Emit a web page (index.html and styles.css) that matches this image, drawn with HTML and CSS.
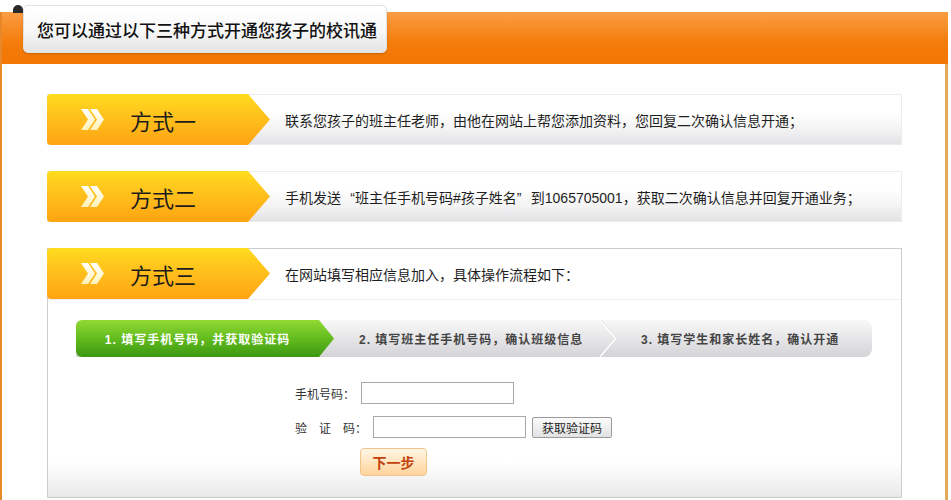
FILE: index.html
```html
<!DOCTYPE html>
<html lang="zh">
<head>
<meta charset="utf-8">
<title>开通校讯通</title>
<link rel="stylesheet" href="styles.css">
</head>
<body>
<div class="page">
  <div class="head">
    <div class="tab">您可以通过以下三种方式开通您孩子的校讯通</div>
  </div>
  <div class="main">
    <div class="way">
      <div class="label">
        <svg class="chev" viewBox="0 0 24 21" width="24" height="21"><defs><linearGradient id="cg1" x1="0" y1="0" x2="0" y2="1"><stop offset="0" stop-color="#ffffff"/><stop offset="1" stop-color="#fff2b8"/></linearGradient></defs><path d="M0 0H7L14 10.5L7 21H0L7 10.5Z" fill="url(#cg1)"/><path d="M9 0H16L23 10.5L16 21H9L16 10.5Z" fill="url(#cg1)"/></svg>
        <span class="lbl-text">方式一</span>
      </div>
      <div class="desc">联系您孩子的班主任老师，由他在网站上帮您添加资料，您回复二次确认信息开通；</div>
    </div>
    <div class="way">
      <div class="label">
        <svg class="chev" viewBox="0 0 24 21" width="24" height="21"><path d="M0 0H7L14 10.5L7 21H0L7 10.5Z" fill="url(#cg1)"/><path d="M9 0H16L23 10.5L16 21H9L16 10.5Z" fill="url(#cg1)"/></svg>
        <span class="lbl-text">方式二</span>
      </div>
      <div class="desc">手机发送<span class="q ql">“</span>班主任手机号码#孩子姓名<span class="q">”</span>到1065705001，获取二次确认信息并回复开通业务；</div>
    </div>
    <div class="box">
      <div class="way way-head">
        <div class="label">
          <svg class="chev" viewBox="0 0 24 21" width="24" height="21"><path d="M0 0H7L14 10.5L7 21H0L7 10.5Z" fill="url(#cg1)"/><path d="M9 0H16L23 10.5L16 21H9L16 10.5Z" fill="url(#cg1)"/></svg>
          <span class="lbl-text">方式三</span>
        </div>
        <div class="desc">在网站填写相应信息加入，具体操作流程如下：</div>
      </div>
      <div class="steps">
        <div class="step step1">1. 填写手机号码，并获取验证码</div>
        <div class="step step2">2. 填写班主任手机号码，确认班级信息</div>
        <svg class="sep" viewBox="0 0 20 37" width="20" height="37"><polyline points="2,0 18,18.5 2,37" fill="none" stroke="#c9c9cc" stroke-width="1"/><polyline points="1,0 17,18.5 1,37" fill="none" stroke="#ffffff" stroke-width="1.6"/></svg>
        <div class="step step3">3. 填写学生和家长姓名，确认开通</div>
      </div>
      <div class="form">
        <div class="frow">
          <label class="flabel">手机号码：</label>
          <input class="ipt" type="text">
        </div>
        <div class="frow">
          <label class="flabel"><span class="sp">验</span><span class="sp">证</span>码：</label>
          <input class="ipt" type="text">
          <button class="getcode" type="button">获取验证码</button>
        </div>
        <button class="next" type="button">下一步</button>
      </div>
    </div>
  </div>
</div>
</body>
</html>
```

FILE: styles.css
```css
* { box-sizing: border-box; }
body {
  margin: 0;
  padding-top: 12px;
  background: #fff;
  font-family: "Liberation Sans", "Noto Sans CJK SC", sans-serif;
  color: #222;
}
.page {
  width: 948px;
}
.head {
  position: relative;
  display: flex;
  align-items: flex-start;
  height: 52px;
  padding-left: 21px;
  border-left: 2px solid #e8862a;
  background: linear-gradient(#fb9d44, #f47c0a 60%, #f27604);
}
.head::before {
  content: "";
  position: absolute;
  left: 11px;
  top: -7px;
  width: 10px;
  height: 8px;
  border-radius: 5px 5px 0 0;
  background: #2a2a2a;
}
.tab {
  position: relative;
  margin-top: -7px;
  width: 364px;
  height: 48px;
  padding-left: 13px;
  display: flex;
  align-items: center;
  font-size: 17px;
  font-weight: 500;
  color: #111;
  border: 1px solid #e2e2e2;
  border-radius: 5px;
  background: linear-gradient(#ffffff, #f9f9f9 50%, #e4e4e4);
  box-shadow: 0 1px 2px rgba(0, 0, 0, 0.18);
}
.main {
  height: 436px;
  padding: 30px 0 0 45px;
  border-left: 2px solid #e8892a;
  border-right: 3px solid #e2a85c;
}
.way {
  display: flex;
  align-items: center;
  width: 855px;
  height: 51px;
  margin-bottom: 26px;
  border: 1px solid #ececec;
  background: linear-gradient(#ffffff 35%, #f3f3f4 70%, #e3e3e6);
}
.label {
  position: relative;
  align-self: stretch;
  width: 201px;
  margin: -1px 0 -1px -1px;
  padding-left: 34px;
  display: flex;
  align-items: center;
  border-radius: 4px 0 0 4px;
  background: linear-gradient(#ffdc1e, #ffc01c 45%, #ffa412);
}
.label::after {
  content: "";
  position: absolute;
  left: 100%;
  top: 0;
  bottom: 0;
  width: 22px;
  background: linear-gradient(#ffdc1e, #ffc01c 45%, #ffa412);
  clip-path: polygon(0 0, 100% 50%, 0 100%);
}
.chev { display: block; flex: none; }
.lbl-text {
  margin-left: 25px;
  font-family: "Noto Sans CJK SC", sans-serif;
  font-size: 22px;
  color: #1c1c1c;
  line-height: 1;
}
.desc {
  margin-left: 37px;
  font-size: 14px;
  color: #1e1e1e;
}
.q {
  display: inline-block;
  width: 14px;
}
.ql { text-align: right; }
.box {
  width: 855px;
  height: 250px;
  border: 1px solid #cdcdcd;
  background: linear-gradient(#ffffff 86%, #e9e9e9);
}
.way-head {
  width: auto;
  height: 51px;
  margin: 0;
  border: none;
  border-bottom: 1px solid #eeeeee;
  background: transparent;
}
.way-head .label {
  margin: -1px 0 0 -1px;
}
.steps {
  display: flex;
  align-items: center;
  width: 796px;
  height: 37px;
  margin: 20px 0 0 28px;
  border-radius: 0 8px 8px 0;
  background: linear-gradient(#f8f8f8, #e6e6e8 50%, #d4d4d8);
  font-size: 12px;
  font-weight: bold;
  letter-spacing: 1px;
  color: #444;
}
.step { white-space: nowrap; }
.step1 {
  position: relative;
  align-self: stretch;
  width: 243px;
  display: flex;
  align-items: center;
  justify-content: center;
  color: #fff;
  border-radius: 6px 0 0 6px;
  background: linear-gradient(#92da34, #62bc1e 50%, #3c9811);
}
.step1::after {
  content: "";
  position: absolute;
  left: 100%;
  top: 0;
  bottom: 0;
  width: 15px;
  background: linear-gradient(#92da34, #62bc1e 50%, #3c9811);
  clip-path: polygon(0 0, 100% 50%, 0 100%);
}
.step2 {
  width: 280px;
  padding-left: 40px;
}
.sep { display: block; flex: none; }
.step3 { padding-left: 22px; }
.form {
  margin-top: 25px;
  padding-left: 247px;
  font-size: 12px;
  color: #333;
}
.frow {
  display: flex;
  align-items: center;
  height: 22px;
  margin-bottom: 12px;
}
.frow + .frow { margin-bottom: 10px; }
.flabel {
  margin-right: 6px;
  white-space: nowrap;
}
.sp { margin-right: 12px; }
.ipt {
  width: 153px;
  height: 22px;
  margin: 0;
  padding: 0 3px;
  border: 1px solid #a9a9a9;
  background: #fff;
}
.getcode {
  width: 80px;
  height: 21px;
  margin-left: 6px;
  padding: 0;
  font-family: "Noto Sans CJK SC", sans-serif;
  font-size: 12px;
  color: #222;
  border: 1px solid #9a9a9a;
  border-radius: 2px;
  background: linear-gradient(#fbfbfb, #e2e2e2);
}
.next {
  display: block;
  width: 67px;
  height: 28px;
  margin-left: 65px;
  padding: 0;
  font-family: "Noto Sans CJK SC", sans-serif;
  font-size: 14px;
  font-weight: bold;
  color: #c2410c;
  border: 1px solid #f0c48a;
  border-radius: 4px;
  background: linear-gradient(#fff6e6, #ffe2b8 60%, #ffd39c);
}
```
